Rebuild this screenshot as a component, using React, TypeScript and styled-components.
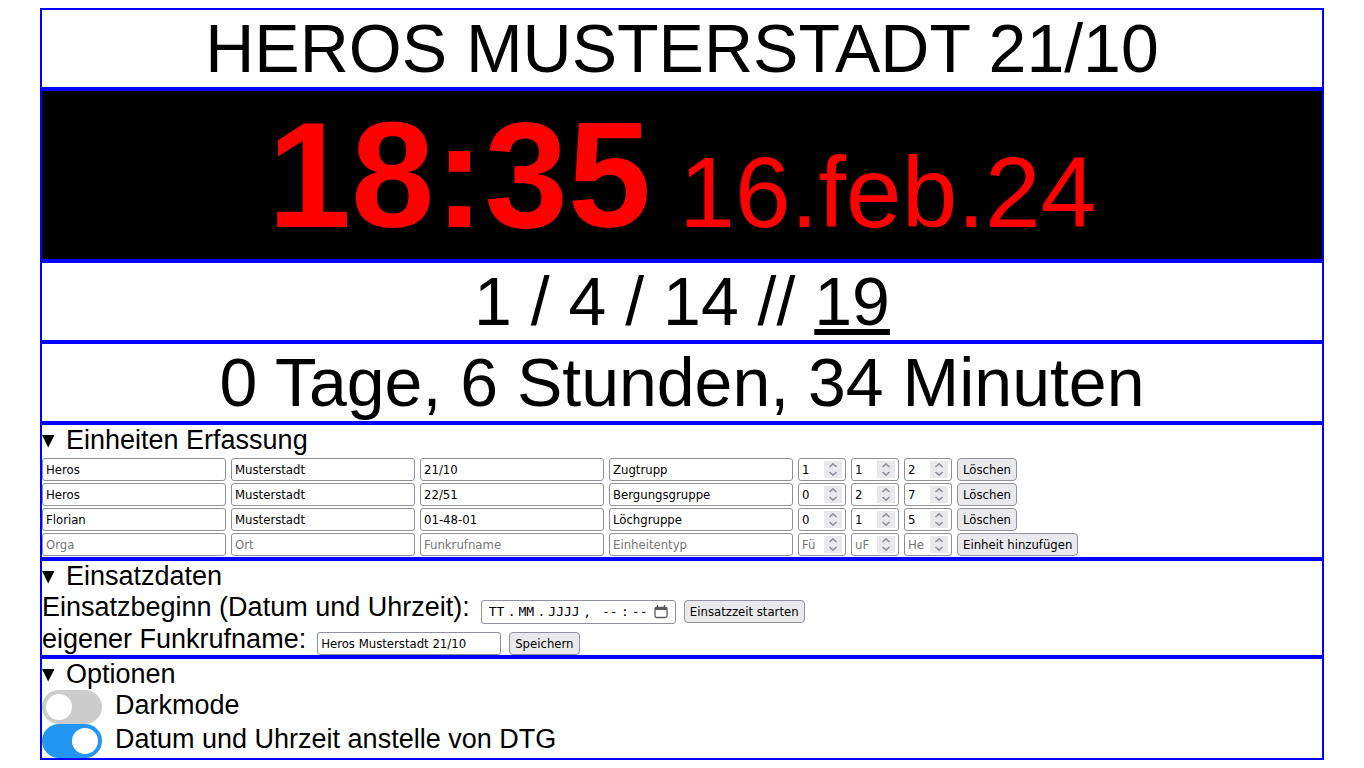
import React, { useState } from "react";
import styled, { createGlobalStyle } from "styled-components";

const GlobalStyle = createGlobalStyle`
  *, *::before, *::after { box-sizing: border-box; }
  body {
    margin: 8px 40px;
    background: #fff;
    color: #000;
    font-family: "Liberation Sans", Arial, sans-serif;
    font-size: 27px;
    line-height: 31px;
  }
`;

const controlFont = `
  font-family: "DejaVu Sans Condensed", "Noto Sans", sans-serif;
  font-size: 13px;
`;

const Board = styled.main`
  display: flex;
  flex-direction: column;
  border: 2px solid #00f;
`;

const Panel = styled.section`
  & + & {
    border-top: 4px solid #00f;
  }
`;

const Headline = styled.h1`
  margin: 0;
  font-size: 68px;
  font-weight: 400;
  line-height: 77px;
  text-align: center;
`;

const Figure = styled.p`
  margin: 0;
  font-size: 68px;
  line-height: 77px;
  text-align: center;
`;

const ClockFace = styled.div`
  display: flex;
  justify-content: center;
  align-items: baseline;
  gap: 28px;
  background: #000;
  color: #f00;
`;

const ClockTime = styled.time`
  font-size: 150px;
  font-weight: 700;
  line-height: 168px;
`;

const ClockDate = styled.time`
  font-size: 100px;
  line-height: 100px;
`;

const Fold = styled.details`
  display: block;
`;

const FoldTitle = styled.summary`
  display: flex;
  gap: 11px;
  list-style: none;
  cursor: pointer;
  &::-webkit-details-marker { display: none; }
`;

const FoldArrow = styled.svg`
  width: 13px;
  height: 31px;
  details:not([open]) & { transform: rotate(-90deg); }
`;

const UnitList = styled.div`
  display: flex;
  flex-direction: column;
  gap: 2px;
  padding: 2px 0 1px;
`;

const UnitRow = styled.form`
  display: flex;
  gap: 5px;
`;

const TextField = styled.input`
  width: 184px;
  height: 23px;
  padding: 0 3px;
  border: 1px solid #8f8f9d;
  border-radius: 3px;
  background: #fff;
  color: #000;
  ${controlFont}
  &::placeholder { color: #757575; }
`;

const NumberBox = styled.span`
  display: flex;
  align-items: center;
  width: 48px;
  height: 23px;
  padding: 0 3px;
  border: 1px solid #8f8f9d;
  border-radius: 3px;
`;

const NumberField = styled.input`
  flex: 1;
  min-width: 0;
  padding: 0;
  border: 0;
  outline: 0;
  background: transparent;
  color: #000;
  ${controlFont}
  appearance: textfield;
  &::-webkit-inner-spin-button { appearance: none; margin: 0; }
  &::placeholder { color: #757575; }
`;

const Spinner = styled.svg`
  flex: none;
  width: 18px;
  height: 17px;
  background: #e9e9ed;
`;

const PushButton = styled.button`
  height: 23px;
  padding: 0 5px;
  border: 1px solid #8f8f9d;
  border-radius: 4px;
  background: #e9e9ed;
  color: #000;
  ${controlFont}
  line-height: 21px;
  white-space: nowrap;
`;

const DataRow = styled.div`
  display: flex;
  align-items: flex-end;
  gap: 11px;
`;

const DataLabel = styled.label`
  align-self: flex-start;
`;

const Controls = styled.div`
  display: flex;
  align-items: flex-start;
  gap: 8px;
  padding-top: 8px;
`;

const DateBox = styled.div`
  display: flex;
  align-items: center;
  height: 24px;
  padding: 0 7px 0 4px;
  border: 1px solid #8f8f9d;
  border-radius: 3px;
  font-family: "DejaVu Sans Mono", monospace;
  font-size: 13px;
  line-height: 22px;
  white-space: pre;
`;

const DatePart = styled.input<{ $chars: number }>`
  width: ${({ $chars }) => $chars * 8 + 6}px;
  padding: 0 3px;
  border: 0;
  background: transparent;
  color: #000;
  font: inherit;
  &::placeholder { color: #000; }
`;

const PickerButton = styled.button`
  display: flex;
  padding: 0;
  margin-left: 3px;
  border: 0;
  background: transparent;
`;

const OptionRow = styled.label`
  display: flex;
  gap: 13px;
  height: 34px;
`;

const Toggle = styled.input`
  appearance: none;
  width: 60px;
  height: 34px;
  margin: 0;
  padding: 4px;
  border-radius: 34px;
  background: #ccc;
  cursor: pointer;
  &::before {
    content: "";
    display: block;
    width: 26px;
    height: 26px;
    border-radius: 50%;
    background: #fff;
  }
  &:checked { background: #2196f3; }
  &:checked::before { margin-left: 26px; }
`;

type Unit = { texts: string[]; counts: string[] };

const units: Unit[] = [
  { texts: ["Heros", "Musterstadt", "21/10", "Zugtrupp"], counts: ["1", "1", "2"] },
  { texts: ["Heros", "Musterstadt", "22/51", "Bergungsgruppe"], counts: ["0", "2", "7"] },
  { texts: ["Florian", "Musterstadt", "01-48-01", "Löchgruppe"], counts: ["0", "1", "5"] },
];

const textColumns = ["Orga", "Ort", "Funkrufname", "Einheitentyp"];
const countColumns = ["Fü", "uF", "He"];

function UnitFields({ unit, action }: { unit?: Unit; action: string }) {
  return (
    <UnitRow onSubmit={(e) => e.preventDefault()}>
      {textColumns.map((name, i) => (
        <TextField key={name} aria-label={name} placeholder={name} defaultValue={unit?.texts[i]} />
      ))}
      {countColumns.map((name, i) => (
        <NumberBox key={name}>
          <NumberField type="number" min={0} aria-label={name} placeholder={name} defaultValue={unit?.counts[i]} />
          <Spinner viewBox="0 0 18 17" fill="none" stroke="#8f8f9d" strokeWidth="1.6" aria-hidden="true">
            <path d="M5.5 6 9 2.8 12.500 6M5.500 11 9 14.200 12.500 11" />
          </Spinner>
        </NumberBox>
      ))}
      <PushButton type="button">{action}</PushButton>
    </UnitRow>
  );
}

function Foldout({ title, children }: { title: string; children: React.ReactNode }) {
  return (
    <Panel>
      <Fold open>
        <FoldTitle>
          <FoldArrow viewBox="0 0 13 31" aria-hidden="true">
            <path d="M0 10h12.500L6.200 22.500z" />
          </FoldArrow>
          {title}
        </FoldTitle>
        {children}
      </Fold>
    </Panel>
  );
}

export default function App() {
  const [dark, setDark] = useState(false);
  const [plainDate, setPlainDate] = useState(true);

  return (
    <>
      <GlobalStyle />
      <Board>
        <Panel>
          <Headline>HEROS MUSTERSTADT 21/10</Headline>
        </Panel>
        <Panel>
          <ClockFace>
            <ClockTime>18:35</ClockTime>
            <ClockDate>16.feb.24</ClockDate>
          </ClockFace>
        </Panel>
        <Panel>
          <Figure>
            1 / 4 / 14 // <u>19</u>
          </Figure>
        </Panel>
        <Panel>
          <Figure>0 Tage, 6 Stunden, 34 Minuten</Figure>
        </Panel>

        <Foldout title="Einheiten Erfassung">
          <UnitList>
            {units.map((unit) => (
              <UnitFields key={unit.texts[2]} unit={unit} action="Löschen" />
            ))}
            <UnitFields action="Einheit hinzufügen" />
          </UnitList>
        </Foldout>

        <Foldout title="Einsatzdaten">
          <DataRow>
            <DataLabel htmlFor="start-day">Einsatzbeginn (Datum und Uhrzeit):</DataLabel>
            <Controls>
              <DateBox>
                <DatePart id="start-day" $chars={2} placeholder="TT" />.
                <DatePart $chars={2} placeholder="MM" aria-label="Monat" />.
                <DatePart $chars={4} placeholder="JJJJ" aria-label="Jahr" />{", "}
                <DatePart $chars={2} placeholder="--" aria-label="Stunde" />:
                <DatePart $chars={2} placeholder="--" aria-label="Minute" />
                <PickerButton type="button" aria-label="Kalender">
                  <svg width="14" height="14" viewBox="0 0 14 14" fill="none" stroke="#5b5b5e">
                    <rect x="1" y="2.5" width="12" height="10" rx="1.5" strokeWidth="1.3" />
                    <path d="M1 3.5h12" strokeWidth="3" />
                    <path d="M3.5 0v3M10.5 0v3" strokeWidth="1.4" />
                  </svg>
                </PickerButton>
              </DateBox>
              <PushButton type="button">Einsatzzeit starten</PushButton>
            </Controls>
          </DataRow>
          <DataRow>
            <DataLabel htmlFor="call-sign">eigener Funkrufname:</DataLabel>
            <Controls>
              <TextField id="call-sign" defaultValue="Heros Musterstadt 21/10" />
              <PushButton type="button">Speichern</PushButton>
            </Controls>
          </DataRow>
        </Foldout>

        <Foldout title="Optionen">
          <OptionRow>
            <Toggle type="checkbox" checked={dark} onChange={(e) => setDark(e.target.checked)} />
            Darkmode
          </OptionRow>
          <OptionRow>
            <Toggle type="checkbox" checked={plainDate} onChange={(e) => setPlainDate(e.target.checked)} />
            Datum und Uhrzeit anstelle von DTG
          </OptionRow>
        </Foldout>
      </Board>
    </>
  );
}
